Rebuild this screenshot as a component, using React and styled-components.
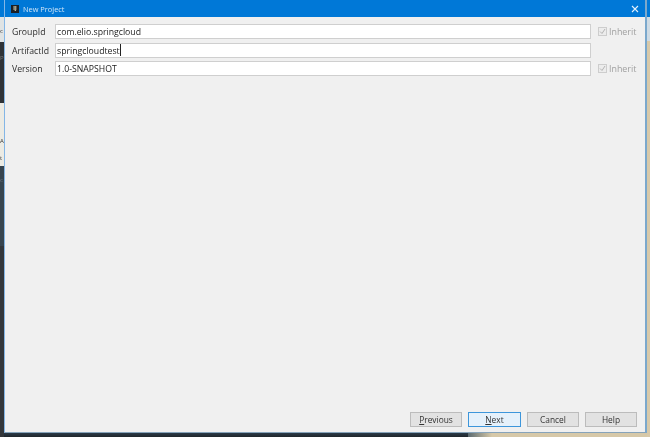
import React from "react";
import styled, { createGlobalStyle } from "styled-components";

const GlobalStyle = createGlobalStyle`
  html, body {
    margin: 0;
    padding: 0;
    width: 650px;
    height: 437px;
    overflow: hidden;
    background: #2b2f33;
  }
  * {
    box-sizing: border-box;
  }
`;

// the dialog sits on a sliver of the IDE and wallpaper behind it
const Desktop = styled.div`
  width: 650px;
  height: 437px;
  display: grid;
  grid-template-columns: 4px 643px 3px;
  grid-template-rows: 433px 4px;
  background: #2b2f33;
  font-family: "Open Sans", "Liberation Sans", sans-serif;
  filter: blur(0.3px);
`;

const BackdropLeft = styled.div`
  grid-column: 1;
  grid-row: 1 / 3;
  display: flex;
  flex-direction: column;
  overflow: hidden;
`;

const BackdropBand = styled.div`
  height: ${(p) => p.$h}px;
  flex: ${(p) => (p.$grow ? 1 : "none")};
  background: ${(p) => p.$bg};
  color: ${(p) => p.$ink || "#333"};
  font-size: 6px;
  line-height: ${(p) => p.$line || 8}px;
  padding-top: ${(p) => p.$top || 0}px;
  white-space: pre;
`;

const BackdropBottom = styled.div`
  grid-column: 2;
  grid-row: 2;
  display: flex;
`;

const BottomDark = styled.div`
  width: 464px;
  background: linear-gradient(#2a3a48, #20262b);
`;

const BottomTan = styled.div`
  flex: 1;
  background: linear-gradient(90deg, #5b6a70, #d6c8a8 24px);
`;

const BackdropRight = styled.div`
  grid-column: 3;
  grid-row: 1 / 3;
  display: flex;
  flex-direction: column;
`;

const Dialog = styled.div`
  grid-column: 2;
  grid-row: 1;
  display: flex;
  flex-direction: column;
  background: #f0f0f0;
  border-left: 1px solid #84b6e6;
  border-right: 2px solid #7ba8cc;
  border-bottom: 1px solid #86a3ba;
`;

const TitleBar = styled.div`
  height: 17px;
  flex: none;
  display: flex;
  align-items: center;
  background: #0078d7;
  padding: 1px 5px 0;
  color: #cfe5f8;
  font-size: 7.4px;
`;

const AppIcon = styled.div`
  width: 8px;
  height: 8px;
  margin-left: 1px;
  background: #1c1f24;
  color: #f4f0d0;
  font-size: 5px;
  font-weight: 700;
  line-height: 7px;
  text-align: center;
`;

const TitleText = styled.span`
  flex: 1;
  margin-left: 4px;
`;

const CloseButton = styled.div`
  width: 8px;
  height: 8px;
  margin-right: 1px;
  display: flex;
`;

const Body = styled.div`
  flex: 1;
  display: flex;
  flex-direction: column;
  padding: 7px 8px 0 7px;
`;

const Form = styled.div`
  display: grid;
  grid-template-columns: 43px 536px 1fr;
  grid-auto-rows: 18.5px;
`;

const Label = styled.div`
  height: 15px;
  padding-top: 1px;
  display: flex;
  align-items: center;
  font-size: 8.7px;
  color: #2c2c2c;
`;

const Field = styled.div`
  height: 15px;
  padding-left: 1px;
  background: #fff;
  border: 1px solid #cfcfcf;
  font-size: 8.7px;
  line-height: 14px;
  color: #222;
  white-space: nowrap;
`;

const Caret = styled.span`
  display: inline-block;
  width: 1px;
  height: 12px;
  background: #222;
  vertical-align: -2px;
`;

const Inherit = styled.div`
  height: 15px;
  display: flex;
  align-items: center;
  gap: 2px;
  margin-left: 7px;
  font-size: 8.9px;
  color: #a0a0a0;
`;

const Check = styled.div`
  width: 9px;
  height: 9px;
  display: flex;
  background: #ececec;
  border: 1px solid #cdcdcd;
`;

const Footer = styled.div`
  margin-top: auto;
  display: flex;
  justify-content: flex-end;
  gap: 6px;
  padding-bottom: 5px;
`;

const Button = styled.div`
  width: ${(p) => (p.$primary ? 53 : 52)}px;
  height: 15px;
  display: flex;
  align-items: center;
  justify-content: center;
  font-size: 8.4px;
  color: #333;
  background: ${(p) => (p.$primary ? "#e5f1fb" : "#e2e2e2")};
  border: 1px solid ${(p) => (p.$primary ? "#3d96db" : "#bcbcbc")};
`;

const Mnemonic = styled.span`
  text-decoration: underline;
`;

const CheckMark = () => (
  <svg width="7" height="7" viewBox="0 0 7 7">
    <path d="M1 3.5 L3 5.5 L6 1" fill="none" stroke="#b4b4b4" strokeWidth="1" />
  </svg>
);

const CloseIcon = () => (
  <svg width="8" height="8" viewBox="0 0 8 8">
    <path d="M1 1 L7 7 M7 1 L1 7" stroke="#e4f1fc" strokeWidth="1.1" fill="none" />
  </svg>
);

const InheritBox = () => (
  <Inherit>
    <Check>
      <CheckMark />
    </Check>
    Inherit
  </Inherit>
);

const App = () => (
  <Desktop>
    <GlobalStyle />
    <BackdropLeft>
      <BackdropBand $h={17} $bg="#0078d7" />
      <BackdropBand $h={25} $bg="#dfe3e4" $top={10}>
        c
      </BackdropBand>
      <BackdropBand $h={61} $bg="#2f3337" $top={12} $ink="#777">
        P
      </BackdropBand>
      <BackdropBand $h={63} $bg="#ecebe4" $top={30} $line={17}>
        {"A\nt"}
      </BackdropBand>
      <BackdropBand $h={80} $bg="#37454f" $top={10} $ink="#6c7880">
        c
      </BackdropBand>
      <BackdropBand $grow $bg="#33373b" />
    </BackdropLeft>
    <Dialog>
      <TitleBar>
        <AppIcon>IJ</AppIcon>
        <TitleText>New Project</TitleText>
        <CloseButton>
          <CloseIcon />
        </CloseButton>
      </TitleBar>
      <Body>
        <Form>
          <Label>GroupId</Label>
          <Field>com.elio.springcloud</Field>
          <InheritBox />
          <Label>ArtifactId</Label>
          <Field>
            springcloudtest
            <Caret />
          </Field>
          <div />
          <Label>Version</Label>
          <Field>1.0-SNAPSHOT</Field>
          <InheritBox />
        </Form>
        <Footer>
          <Button>
            <span>
              <Mnemonic>P</Mnemonic>revious
            </span>
          </Button>
          <Button $primary>
            <span>
              <Mnemonic>N</Mnemonic>ext
            </span>
          </Button>
          <Button>Cancel</Button>
          <Button>Help</Button>
        </Footer>
      </Body>
    </Dialog>
    <BackdropRight>
      <BackdropBand $h={17} $bg="#0078d7" />
      <BackdropBand $h={24} $bg="#cfdbe4" />
      <BackdropBand $grow $bg="#d8c9a9" />
    </BackdropRight>
    <BackdropBottom>
      <BottomDark />
      <BottomTan />
    </BackdropBottom>
  </Desktop>
);

export default App;
